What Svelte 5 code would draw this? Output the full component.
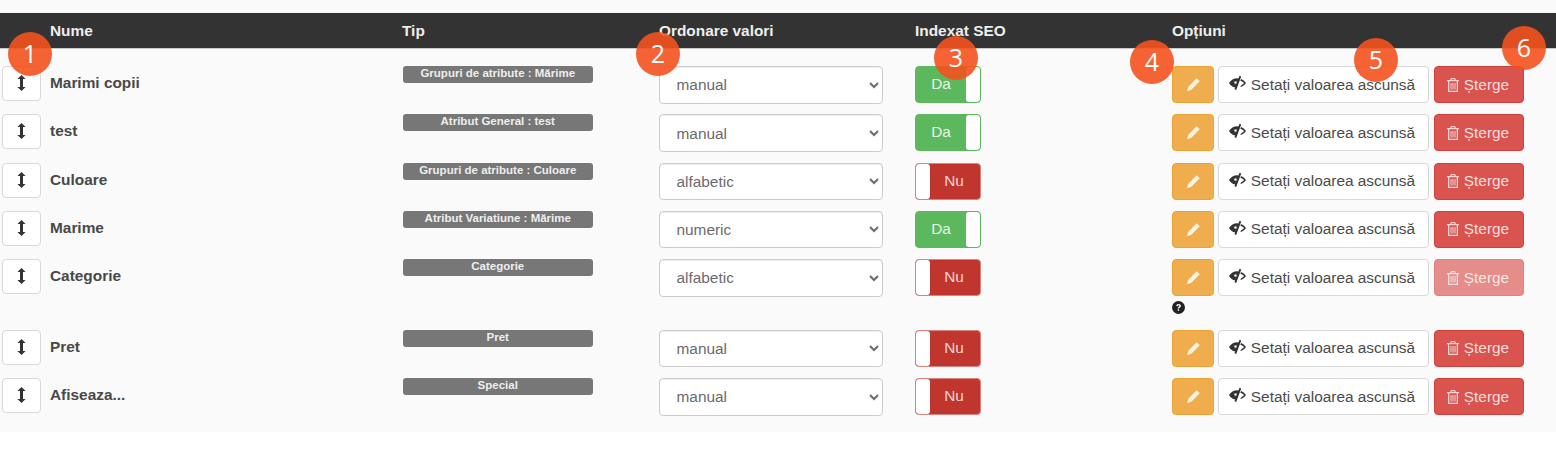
<script>
	const rows = [
		{ name: 'Marimi copii', type: 'Grupuri de atribute : Mărime', order: 'manual', seo: true },
		{ name: 'test', type: 'Atribut General : test', order: 'manual', seo: true },
		{ name: 'Culoare', type: 'Grupuri de atribute : Culoare', order: 'alfabetic', seo: false },
		{ name: 'Marime', type: 'Atribut Variatiune : Mărime', order: 'numeric', seo: true },
		{ name: 'Categorie', type: 'Categorie', order: 'alfabetic', seo: false, locked: true },
		{ name: 'Pret', type: 'Pret', order: 'manual', seo: false },
		{ name: 'Afiseaza...', type: 'Special', order: 'manual', seo: false }
	];

	const orders = ['manual', 'alfabetic', 'numeric'];

	const markers = [
		{ n: 1, x: 8, y: 32 },
		{ n: 2, x: 636, y: 32 },
		{ n: 3, x: 934, y: 36 },
		{ n: 4, x: 1130, y: 40 },
		{ n: 5, x: 1354, y: 38 },
		{ n: 6, x: 1502, y: 26 }
	];
</script>

<section class="page">
	<div class="head">
		<span></span>
		<span>Nume</span>
		<span>Tip</span>
		<span>Ordonare valori</span>
		<span>Indexat SEO</span>
		<span>Opțiuni</span>
	</div>

	<div class="rows">
		{#each rows as row}
			<div class="row" class:tall={row.locked}>
				<div class="handle-cell">
					<button class="handle" aria-label="Mută">
						<svg width="9" height="16" viewBox="0 0 9 16">
							<path d="M4.500 0 8.600 4H6v8h2.600L4.500 16 .4 12H3V4H.4z" fill="#333" />
						</svg>
					</button>
				</div>
				<div class="name">{row.name}</div>
				<div><div class="badge">{row.type}</div></div>
				<div>
					<select class="order" value={row.order}>
						{#each orders as o}
							<option value={o}>{o}</option>
						{/each}
					</select>
				</div>
				<div>
					{#if row.seo}
						<div class="toggle on"><span class="label">Da</span><span class="knob"></span></div>
					{:else}
						<div class="toggle off"><span class="knob"></span><span class="label">Nu</span></div>
					{/if}
				</div>
				<div>
					<div class="actions">
						<button class="btn edit" aria-label="Editează">
							<svg width="15" height="15" viewBox="0 0 14 14">
								<path d="M10 1.200 12.800 4 5 11.800 1 13l1.200-4z" fill="#fff" opacity=".85" />
							</svg>
						</button>
						<button class="btn hide">
							<svg class="eye" width="17" height="16" viewBox="0 0 17 15">
								<path fill-rule="evenodd" d="M0 7.500C2 4.500 4.800 2.800 8 2.800l1.500.2 1-2.800 1.700.8-5 13.500-1.700-.8.700-1.800C3.500 11.500 1.500 10 0 7.500zM5.200 7a1.300 1.300 0 1 0 2.600 0 1.300 1.300 0 1 0-2.600 0z" fill="#333" />
								<path d="M12 3.600c2 .8 3.600 2.100 5 3.900-1.400 2-3.200 3.400-5.600 4.200l.8-1.900c1.200-.6 2.200-1.300 2.900-2.300-1-1-2.200-1.800-3.700-2.200z" fill="#333" />
							</svg>
							Setați valoarea ascunsă
						</button>
						<button class="btn del" class:disabled={row.locked}>
							<svg width="12" height="14" viewBox="0 0 12 14">
								<path fill-rule="evenodd" d="M4 0h4l1 2h3v1.300h-1V14H1V3.300H0V2h3zM4.500 1.200 4 2h4l-.5-.8zM2.300 3.300v9.500h7.400V3.300zM3.500 5h1v6.500h-1zM5.500 5h1v6.500h-1zM7.500 5h1v6.500h-1z" fill="#fff" opacity=".75" />
							</svg>
							Șterge
						</button>
					</div>
					{#if row.locked}
						<svg class="help" width="13" height="13" viewBox="0 0 13 13">
							<circle cx="6.500" cy="6.500" r="6.500" fill="#222" />
							<path d="M4.200 5C4.300 3.700 5.300 3 6.600 3 8 3 8.900 3.800 8.900 4.900c0 1.700-1.800 1.600-1.800 2.700H5.700c0-1.800 1.700-1.800 1.700-2.600 0-.4-.3-.7-.8-.7-.5 0-.9.300-1 .9zM5.700 8.300h1.400v1.500H5.700z" fill="#fff" />
						</svg>
					{/if}
				</div>
			</div>
		{/each}
	</div>

	{#each markers as m}
		<div class="marker" style="left: {m.x}px; top: {m.y}px">{m.n}</div>
	{/each}
</section>

<style>
	:global(body) {
		background: #fff;
	}

	.page {
		position: relative;
		background: #fafafa;
		padding-top: 13px;
		font-family: 'Liberation Sans', Arial, sans-serif;
		font-size: 15.4px;
		color: #333;
	}

	.head,
	.row {
		display: grid;
		grid-template-columns: 50px 352px 257px 256px 257px 1fr;
	}

	.head {
		height: 35px;
		align-items: center;
		background: #333;
		color: #eee;
		font-weight: 700;
		border-bottom: 1px solid #ccc;
	}

	.rows {
		padding: 17px 0 16px;
		display: flex;
		flex-direction: column;
		gap: 10.25px;
	}

	.row {
		height: 38px;
	}

	.row.tall {
		height: 60.5px;
	}

	.handle-cell {
		padding-left: 2px;
	}

	.handle {
		width: 39px;
		height: 35px;
		padding: 0 1px 1px 0;
		display: flex;
		align-items: center;
		justify-content: center;
		background: #fff;
		border: 1px solid #d8d8d8;
		border-radius: 4px;
	}

	.name {
		font-weight: 700;
		color: #484848;
		line-height: 33px;
	}

	.badge {
		width: 189.5px;
		height: 17px;
		margin-left: 1px;
		background: #777;
		border-radius: 3px;
		color: #eee;
		font-size: 11.5px;
		font-weight: 700;
		line-height: 14px;
		text-align: center;
	}

	.order {
		width: 224px;
		height: 37.5px;
		margin-left: -0.5px;
		padding: 0 12px 0 13px;
		background: #fff;
		border: 1px solid #ccc;
		border-radius: 4px;
		box-shadow: inset 0 1px 1px rgba(0, 0, 0, 0.075);
		color: #6b6b6b;
		font-family: inherit;
		font-size: 15.4px;
	}

	.toggle {
		width: 66px;
		height: 37px;
		display: flex;
		box-sizing: border-box;
		border-radius: 4px;
		overflow: hidden;
		color: #e6f3e6;
		line-height: 34px;
		text-align: center;
	}

	.toggle .label {
		flex: 1;
	}

	.toggle .knob {
		width: 14px;
		background: #fff;
		border-radius: 3px;
	}

	.toggle.on {
		background: #5cb85c;
		border: 1px solid #5cb85c;
	}

	.toggle.off {
		background: #c0352e;
		border: 1px solid #d9837f;
		color: #f3d4d3;
	}

	.toggle.off .label {
		padding-right: 2px;
	}

	.actions {
		display: flex;
		gap: 4px;
	}

	.btn {
		height: 37px;
		padding: 0;
		display: flex;
		align-items: center;
		justify-content: center;
		gap: 5px;
		border: 1px solid transparent;
		border-radius: 4px;
		font-family: inherit;
		font-size: 15.4px;
	}

	.edit {
		width: 42px;
		background: #f0ad4e;
		border-color: #eea236;
	}

	.hide {
		width: 211px;
		padding-right: 3px;
		background: #fff;
		border-color: #d8d8d8;
		color: #4a4a4a;
	}

	.eye {
		margin-top: -3px;
	}

	.del {
		width: 90px;
		margin-left: 1px;
		padding-right: 2px;
		background: #d9534f;
		color: #f7dedd;
		border-color: #d43f3a;
	}

	.del.disabled {
		opacity: 0.65;
	}

	.help {
		display: block;
		margin-top: 5px;
	}

	.marker {
		position: absolute;
		width: 44px;
		height: 44px;
		border-radius: 50%;
		background: rgba(244, 81, 30, 0.9);
		color: #fff;
		font-family: 'Open Sans', sans-serif;
		font-size: 25px;
		line-height: 42px;
		text-align: center;
	}
</style>
